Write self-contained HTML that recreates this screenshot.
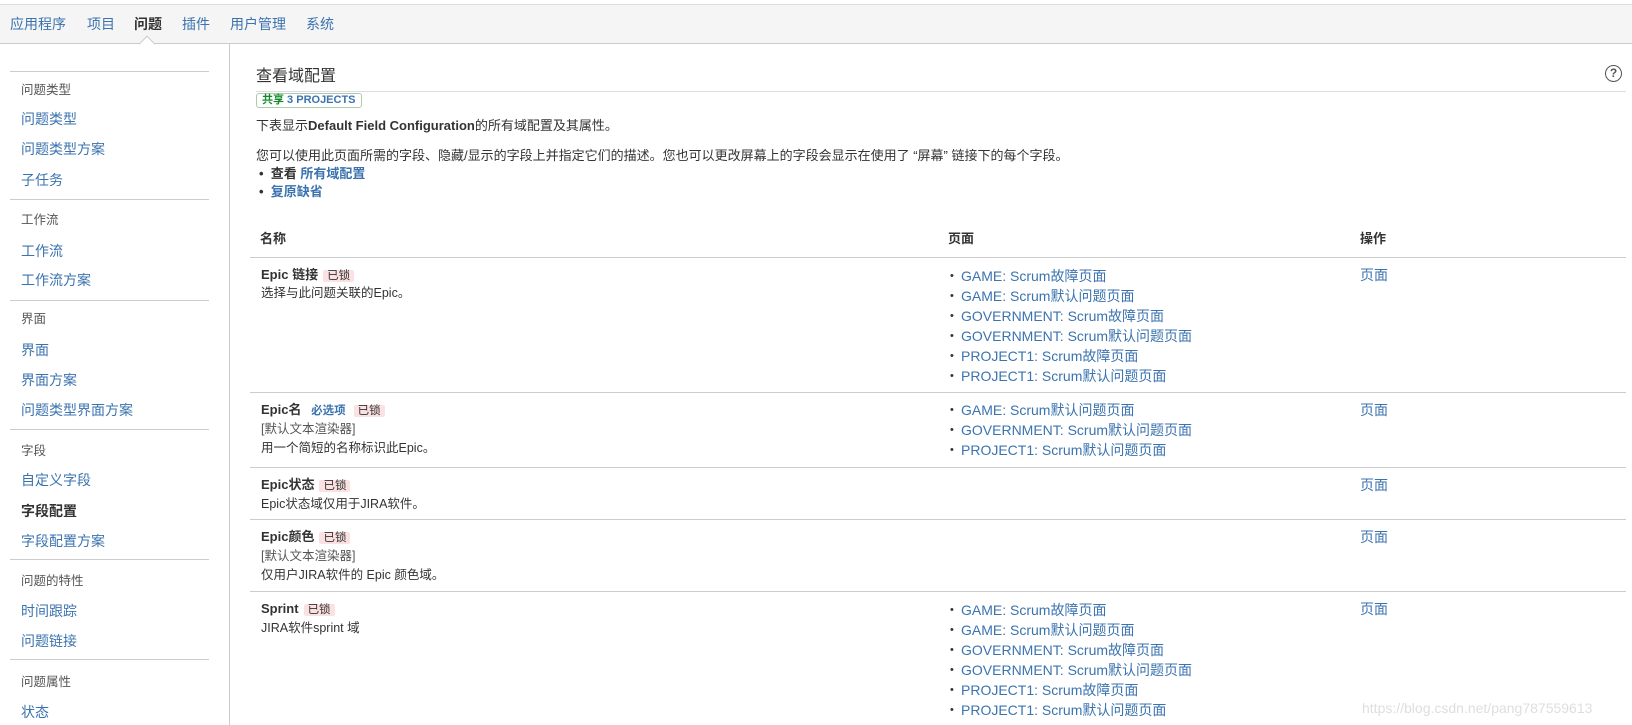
<!DOCTYPE html>
<html><head><meta charset="utf-8"><style>
*{margin:0;padding:0;box-sizing:border-box}
body{width:1632px;height:725px;overflow:hidden;background:#fff;font-family:"Liberation Sans","Noto Sans CJK SC",sans-serif;color:#333;position:relative}
.a{position:absolute;white-space:nowrap;line-height:20px}
.l{color:#3b73af}
.h{font-size:12.5px;color:#555}
.s{font-size:14px}
.hr{position:absolute;height:1px;background:#ccc}
.lk{background:#fbe1e1;color:#333;font-size:11.5px;padding:0 4px;margin-left:5px;font-weight:normal;border-radius:2px}
.d{font-size:12.5px}
ul.p{position:absolute;list-style:none;font-size:14px;line-height:20px}
ul.p li{color:#3b73af;position:relative;padding-left:11px}
ul.p li:before{content:"•";position:absolute;left:0;color:#333;font-size:11px}
</style></head><body>
<div class="hr" style="top:4px;left:0;width:1632px;background:#ddd"></div>
<div style="position:absolute;top:5px;left:0;width:1632px;height:39px;background:#f5f5f5;border-bottom:1px solid #ccc"></div>
<div class="a s l" style="top:14px;left:10px">应用程序</div>
<div class="a s l" style="top:14px;left:87px">项目</div>
<div class="a s" style="top:14px;left:134px;font-weight:bold;color:#333">问题</div>
<div class="a s l" style="top:14px;left:182px">插件</div>
<div class="a s l" style="top:14px;left:230px">用户管理</div>
<div class="a s l" style="top:14px;left:306px">系统</div>
<div style="position:absolute;top:38px;left:141px;width:12px;height:12px;background:#fff;border-left:1px solid #ccc;border-top:1px solid #ccc;transform:rotate(45deg)"></div>
<div style="position:absolute;top:44px;left:229px;width:1px;height:681px;background:#ccc"></div>

<div class="hr" style="top:71px;left:10px;width:199px"></div>
<div class="a h" style="top:80px;left:21px">问题类型</div>
<div class="a s l" style="top:109px;left:21px">问题类型</div>
<div class="a s l" style="top:139px;left:21px">问题类型方案</div>
<div class="a s l" style="top:170px;left:21px">子任务</div>
<div class="hr" style="top:199px;left:10px;width:199px"></div>
<div class="a h" style="top:210px;left:21px">工作流</div>
<div class="a s l" style="top:241px;left:21px">工作流</div>
<div class="a s l" style="top:270px;left:21px">工作流方案</div>
<div class="hr" style="top:300px;left:10px;width:199px"></div>
<div class="a h" style="top:309px;left:21px">界面</div>
<div class="a s l" style="top:340px;left:21px">界面</div>
<div class="a s l" style="top:370px;left:21px">界面方案</div>
<div class="a s l" style="top:400px;left:21px">问题类型界面方案</div>
<div class="hr" style="top:429px;left:10px;width:199px"></div>
<div class="a h" style="top:441px;left:21px">字段</div>
<div class="a s l" style="top:470px;left:21px">自定义字段</div>
<div class="a s" style="top:501px;left:21px;font-weight:bold;color:#333">字段配置</div>
<div class="a s l" style="top:531px;left:21px">字段配置方案</div>
<div class="hr" style="top:559px;left:10px;width:199px"></div>
<div class="a h" style="top:571px;left:21px">问题的特性</div>
<div class="a s l" style="top:601px;left:21px">时间跟踪</div>
<div class="a s l" style="top:631px;left:21px">问题链接</div>
<div class="hr" style="top:659px;left:10px;width:199px"></div>
<div class="a h" style="top:672px;left:21px">问题属性</div>
<div class="a s l" style="top:702px;left:21px">状态</div>

<div class="a" style="top:66px;left:256px;font-size:16px;line-height:22px;color:#333">查看域配置</div>
<div style="position:absolute;top:65px;left:1605px;width:17px;height:17px;border:1.5px solid #555;border-radius:50%;font-size:12px;font-weight:bold;text-align:center;line-height:14px;color:#555">?</div>
<div class="hr" style="top:91px;left:256px;width:1370px;background:#ddd"></div>
<div class="a" style="top:93px;left:256px;height:15px;line-height:13px;border:1px solid #aaccaa;border-radius:3px;padding:0 5px;font-size:11px;font-weight:bold;color:#3b73af"><span style="color:#14892c">共享</span> 3 PROJECTS</div>
<div class="a" style="top:116px;left:256px;font-size:13px">下表显示<b>Default Field Configuration</b>的所有域配置及其属性。</div>
<div class="a" style="top:146px;left:256px;font-size:13px">您可以使用此页面所需的字段、隐藏/显示的字段上并指定它们的描述。您也可以更改屏幕上的字段会显示在使用了 “屏幕” 链接下的每个字段。</div>
<div class="a" style="top:164px;left:259px;font-size:13px;font-weight:bold">•&nbsp; 查看 <span class="l">所有域配置</span></div>
<div class="a" style="top:182px;left:259px;font-size:13px;font-weight:bold">•&nbsp; <span class="l">复原缺省</span></div>

<div class="a" style="top:229px;left:260px;font-size:13px;font-weight:bold">名称</div>
<div class="a" style="top:229px;left:948px;font-size:13px;font-weight:bold">页面</div>
<div class="a" style="top:229px;left:1360px;font-size:13px;font-weight:bold">操作</div>
<div class="hr" style="top:257px;left:250px;width:1376px"></div>

<div class="a" style="top:265px;left:261px;font-size:13px;font-weight:bold">Epic 链接<span class="lk">已锁</span></div>
<div class="a d" style="top:283px;left:261px">选择与此问题关联的Epic。</div>
<ul class="p" style="top:266px;left:950px"><li>GAME: Scrum故障页面</li><li>GAME: Scrum默认问题页面</li><li>GOVERNMENT: Scrum故障页面</li><li>GOVERNMENT: Scrum默认问题页面</li><li>PROJECT1: Scrum故障页面</li><li>PROJECT1: Scrum默认问题页面</li></ul>
<div class="a s l" style="top:265px;left:1360px">页面</div>
<div class="hr" style="top:392px;left:250px;width:1376px"></div>

<div class="a" style="top:400px;left:261px;font-size:13px;font-weight:bold">Epic名 <span class="l" style="font-size:11.5px;margin-left:6px">必选项</span><span class="lk" style="margin-left:8px">已锁</span></div>
<div class="a d" style="top:419px;left:261px;color:#555">[默认文本渲染器]</div>
<div class="a d" style="top:438px;left:261px">用一个简短的名称标识此Epic。</div>
<ul class="p" style="top:400px;left:950px"><li>GAME: Scrum默认问题页面</li><li>GOVERNMENT: Scrum默认问题页面</li><li>PROJECT1: Scrum默认问题页面</li></ul>
<div class="a s l" style="top:400px;left:1360px">页面</div>
<div class="hr" style="top:467px;left:250px;width:1376px"></div>

<div class="a" style="top:475px;left:261px;font-size:13px;font-weight:bold">Epic状态<span class="lk">已锁</span></div>
<div class="a d" style="top:494px;left:261px">Epic状态域仅用于JIRA软件。</div>
<div class="a s l" style="top:475px;left:1360px">页面</div>
<div class="hr" style="top:519px;left:250px;width:1376px"></div>

<div class="a" style="top:527px;left:261px;font-size:13px;font-weight:bold">Epic颜色<span class="lk">已锁</span></div>
<div class="a d" style="top:546px;left:261px;color:#555">[默认文本渲染器]</div>
<div class="a d" style="top:565px;left:261px">仅用户JIRA软件的 Epic 颜色域。</div>
<div class="a s l" style="top:527px;left:1360px">页面</div>
<div class="hr" style="top:591px;left:250px;width:1376px"></div>

<div class="a" style="top:599px;left:261px;font-size:13px;font-weight:bold">Sprint<span class="lk">已锁</span></div>
<div class="a d" style="top:618px;left:261px">JIRA软件sprint 域</div>
<ul class="p" style="top:600px;left:950px"><li>GAME: Scrum故障页面</li><li>GAME: Scrum默认问题页面</li><li>GOVERNMENT: Scrum故障页面</li><li>GOVERNMENT: Scrum默认问题页面</li><li>PROJECT1: Scrum故障页面</li><li>PROJECT1: Scrum默认问题页面</li></ul>
<div class="a s l" style="top:599px;left:1360px">页面</div>
<div class="a" style="top:698px;left:1362px;font-size:14px;color:rgba(200,200,200,0.6)">https://blog.csdn.net/pang787559613</div>
</body></html>
